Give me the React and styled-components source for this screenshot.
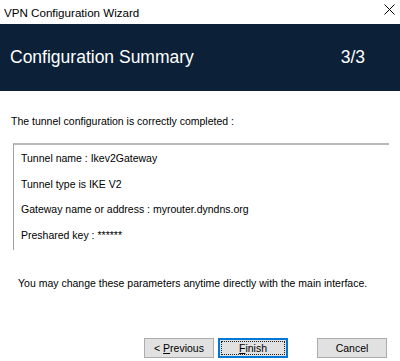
import styled, { createGlobalStyle } from 'styled-components'

const GlobalStyle = createGlobalStyle`
	body {
		margin: 0;
		background: #ffffff;
	}
`

const Window = styled.div`
	width: 400px;
	height: 361px;
	display: flex;
	flex-direction: column;
	background: #ffffff;
	overflow: hidden;
	font-family: 'Liberation Sans', Arial, sans-serif;
	color: #000000;
`

const TitleBar = styled.div`
	height: 24px;
	display: flex;
	align-items: center;
	justify-content: space-between;
	padding: 0 5px 0 4px;
	font-size: 11.6px;
	color: #000000;
`

const CloseButton = styled.svg`
	width: 11px;
	height: 11px;
	display: block;
	align-self: flex-start;
	margin-top: 4px;
`

const Banner = styled.div`
	height: 67px;
	background: #0c2137;
	color: #ffffff;
	display: flex;
	align-items: center;
	justify-content: space-between;
	padding: 0 35px 0 10px;
	font-size: 17.5px;
`

const Content = styled.main`
	flex: 1;
	display: flex;
	flex-direction: column;
	padding: 23px 11px 0 11px;
	font-size: 10.5px;
`

const Intro = styled.p`
	margin: 0;
	line-height: 14px;
`

const SummaryBox = styled.div`
	box-sizing: border-box;
	margin: 15px 0 0 2px;
	height: 107px;
	border-top: 2px solid #b9b9b9;
	border-left: 1px solid #a0a0a0;
	padding: 6px 0 0 7px;
	display: flex;
	flex-direction: column;
	gap: 11.5px;
`

const SummaryLine = styled.div`
	line-height: 14px;
	height: 14px;
`

const Note = styled.p`
	margin: 26px 0 0 7px;
	line-height: 14px;
`

const ButtonRow = styled.div`
	margin-top: auto;
	height: 20px;
	padding: 0 13px 3px 144px;
	display: flex;
	align-items: flex-start;
`

const Button = styled.button`
	width: 70px;
	height: 20px;
	margin-right: ${({ $gap }) => $gap || 0}px;
	background: #e1e1e1;
	border: 1px solid ${({ $primary }) => ($primary ? '#0078d7' : '#adadad')};
	box-shadow: ${({ $primary }) => ($primary ? 'inset 0 0 0 1px #0078d7' : 'none')};
	font-family: 'Liberation Sans', Arial, sans-serif;
	font-size: 10.5px;
	color: #000000;
	padding: 0;
	position: relative;

	u {
		text-decoration: underline;
	}
`

const FocusRing = styled.span`
	position: absolute;
	inset: 2px;
	border: 1px dotted #202020;
`

export default () => (
	<>
		<GlobalStyle />
		<Window>
			<TitleBar>
				<span>VPN Configuration Wizard</span>
				<CloseButton viewBox="0 0 11 11">
					<path d="M0.5 0.5 L10.5 10.5 M10.5 0.5 L0.5 10.5" stroke="#000" strokeWidth="1" />
				</CloseButton>
			</TitleBar>
			<Banner>
				<span>Configuration Summary</span>
				<span>3/3</span>
			</Banner>
			<Content>
				<Intro>The tunnel configuration is correctly completed :</Intro>
				<SummaryBox>
					<SummaryLine>Tunnel name : Ikev2Gateway</SummaryLine>
					<SummaryLine>Tunnel type is IKE V2</SummaryLine>
					<SummaryLine>Gateway name or address : myrouter.dyndns.org</SummaryLine>
					<SummaryLine>Preshared key : ******</SummaryLine>
				</SummaryBox>
				<Note>You may change these parameters anytime directly with the main interface.</Note>
			</Content>
			<ButtonRow>
				<Button $gap={4}>
					&lt; <u>P</u>revious
				</Button>
				<Button $primary $gap={29}>
					<FocusRing />
					<u>F</u>inish
				</Button>
				<Button>Cancel</Button>
			</ButtonRow>
		</Window>
	</>
)
